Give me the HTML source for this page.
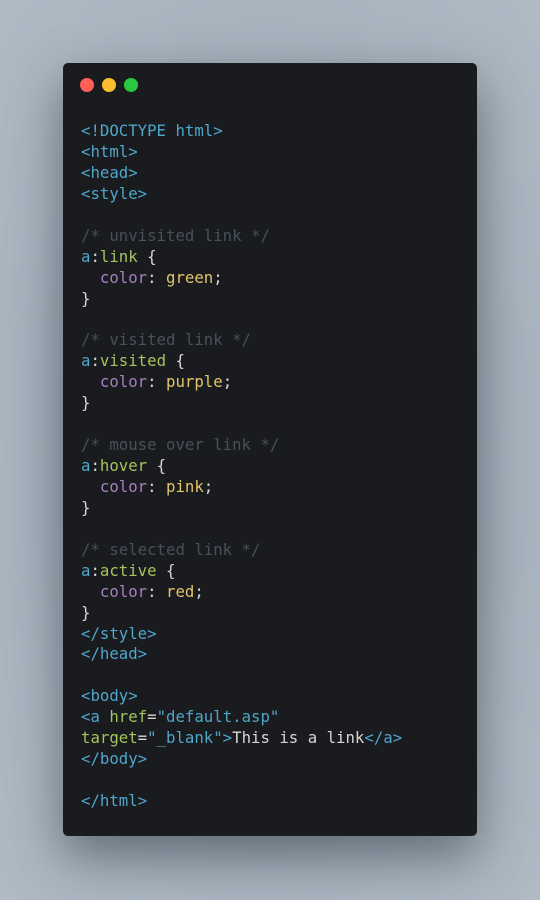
<!DOCTYPE html>
<html><head><style>
html,body{margin:0;padding:0;}
body{width:540px;height:900px;background:radial-gradient(ellipse at center,#8d99a6 0%,#a9b4bf 70%,#b0bac5 100%);position:relative;overflow:hidden;}
.win{position:absolute;left:63px;top:63px;width:414px;height:773px;background:#1a1b1e;border-radius:5px;box-shadow:0 20px 50px rgba(40,50,60,.55);}
.d{position:absolute;top:15px;width:14px;height:14px;border-radius:50%;}
pre{position:absolute;left:18px;top:58px;margin:0;font-family:"DejaVu Sans Mono","Liberation Mono",monospace;font-size:15.7px;line-height:20.94px;color:#d6d6d6;}
.t{color:#4ea6cb}.a{color:#a3c45e}.c{color:#46515b}.p{color:#a57fc0}.y{color:#e3c468}
</style></head><body>
<div class="win">
<div class="d" style="left:17px;background:#fe5f57"></div>
<div class="d" style="left:39px;background:#febc2e"></div>
<div class="d" style="left:61px;background:#28c840"></div>
<pre><span class="t">&lt;!DOCTYPE html&gt;</span>
<span class="t">&lt;html&gt;</span>
<span class="t">&lt;head&gt;</span>
<span class="t">&lt;style&gt;</span>

<span class="c">/* unvisited link */</span>
<span class="t">a</span>:<span class="a">link</span> {
  <span class="p">color</span>: <span class="y">green</span>;
}

<span class="c">/* visited link */</span>
<span class="t">a</span>:<span class="a">visited</span> {
  <span class="p">color</span>: <span class="y">purple</span>;
}

<span class="c">/* mouse over link */</span>
<span class="t">a</span>:<span class="a">hover</span> {
  <span class="p">color</span>: <span class="y">pink</span>;
}

<span class="c">/* selected link */</span>
<span class="t">a</span>:<span class="a">active</span> {
  <span class="p">color</span>: <span class="y">red</span>;
}
<span class="t">&lt;/style&gt;</span>
<span class="t">&lt;/head&gt;</span>

<span class="t">&lt;body&gt;</span>
<span class="t">&lt;a</span> <span class="a">href</span>=<span class="t">"default.asp"</span>
<span class="a">target</span>=<span class="t">"_blank"&gt;</span>This is a link<span class="t">&lt;/a&gt;</span>
<span class="t">&lt;/body&gt;</span>

<span class="t">&lt;/html&gt;</span></pre>
</div>
</body></html>
